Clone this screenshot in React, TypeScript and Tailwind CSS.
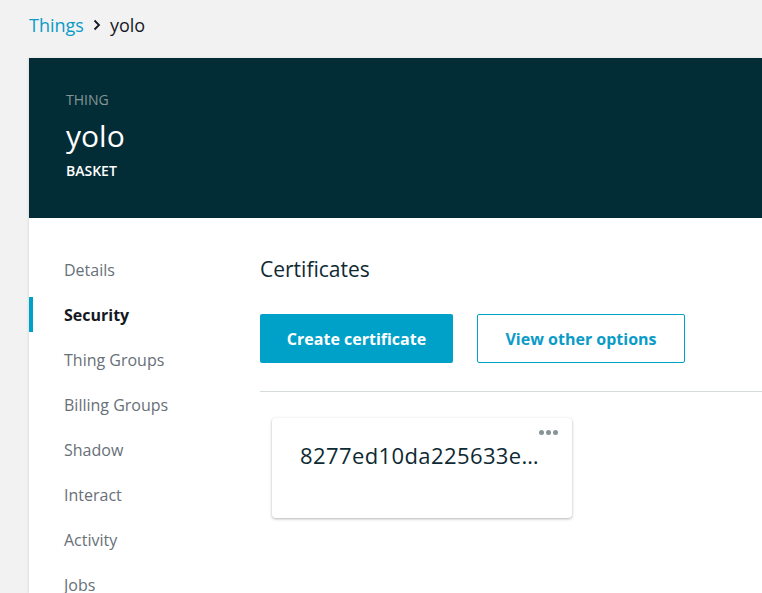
import React from "react";

const nav = ["Details", "Security", "Thing Groups", "Billing Groups", "Shadow", "Interact", "Activity", "Jobs"];

export default function App() {
  return (
    <div className="w-[762px] h-[593px] overflow-hidden bg-[#f2f2f2]" style={{ fontFamily: '"Open Sans", sans-serif' }}>
      <div className="h-[50px] mb-[8px] pl-[29px] flex items-center text-[18px]">
        <span className="text-[#0a9bc7]">Things</span>
        <svg width="14" height="14" viewBox="0 0 14 14" className="mx-[6px]">
          <path d="M4.5 2.5 L9 7 L4.5 11.5" fill="none" stroke="#16191f" strokeWidth="1.8" />
        </svg>
        <span className="text-[#16191f]">yolo</span>
      </div>
      <div className="ml-[29px] flex flex-col shadow-[-1px_0_2px_rgba(0,0,0,0.08)]">
        <div className="h-[160px] shrink-0 bg-[#022d36] pl-[37px] pt-[32px] flex flex-col">
          <div className="text-[14px] leading-[20px] text-[#879596]">THING</div>
          <div className="text-[30px] leading-[36px] text-white mt-[8px]">yolo</div>
          <div className="text-[14px] leading-[18px] text-white font-semibold mt-[8px]">BASKET</div>
        </div>
        <div className="bg-white h-[375px] flex">
          <div className="w-[231px] shrink-0 flex flex-col pt-[29px]">
            {nav.map((n) => (
              <div key={n} className="h-[45px] shrink-0 flex items-center">
                <div className={`w-[4px] h-[35px] ${n === "Security" ? "bg-[#00a1c9]" : ""}`} />
                <span className={`pl-[31px] text-[16px] ${n === "Security" ? "text-[#16191f] font-bold" : "text-[#687078]"}`}>{n}</span>
              </div>
            ))}
          </div>
          <div className="flex-1 flex flex-col">
            <div className="pt-[37px] text-[21px] leading-[28px] text-[#0e2a33]">Certificates</div>
            <div className="flex mt-[31px] gap-[24px] shrink-0">
              <button className="w-[193px] h-[49px] bg-[#00a1c9] rounded-[2px] text-white font-bold text-[16px]">Create certificate</button>
              <button className="w-[208px] h-[49px] border border-[#00a1c9] rounded-[2px] text-[#0a9bc7] font-bold text-[16px] bg-white">View other options</button>
            </div>
            <div className="mt-[28px] h-px shrink-0 bg-[#d5dbdb]" />
            <div className="mt-[26px] ml-[12px] w-[300px] h-[100px] shrink-0 bg-white rounded-[4px] shadow-[0_1px_3px_rgba(0,0,0,0.3)] relative">
              <div className="absolute right-[14px] top-[12px] flex gap-[2px]">
                <span className="w-[5px] h-[5px] rounded-full bg-[#879596]" />
                <span className="w-[5px] h-[5px] rounded-full bg-[#879596]" />
                <span className="w-[5px] h-[5px] rounded-full bg-[#879596]" />
              </div>
              <div className="pt-[22px] pl-[28px] text-[22px] leading-[30px] tracking-[0.4px] text-[#0e2a33] whitespace-nowrap">8277ed10da225633e…</div>
            </div>
          </div>
        </div>
      </div>
    </div>
  );
}
